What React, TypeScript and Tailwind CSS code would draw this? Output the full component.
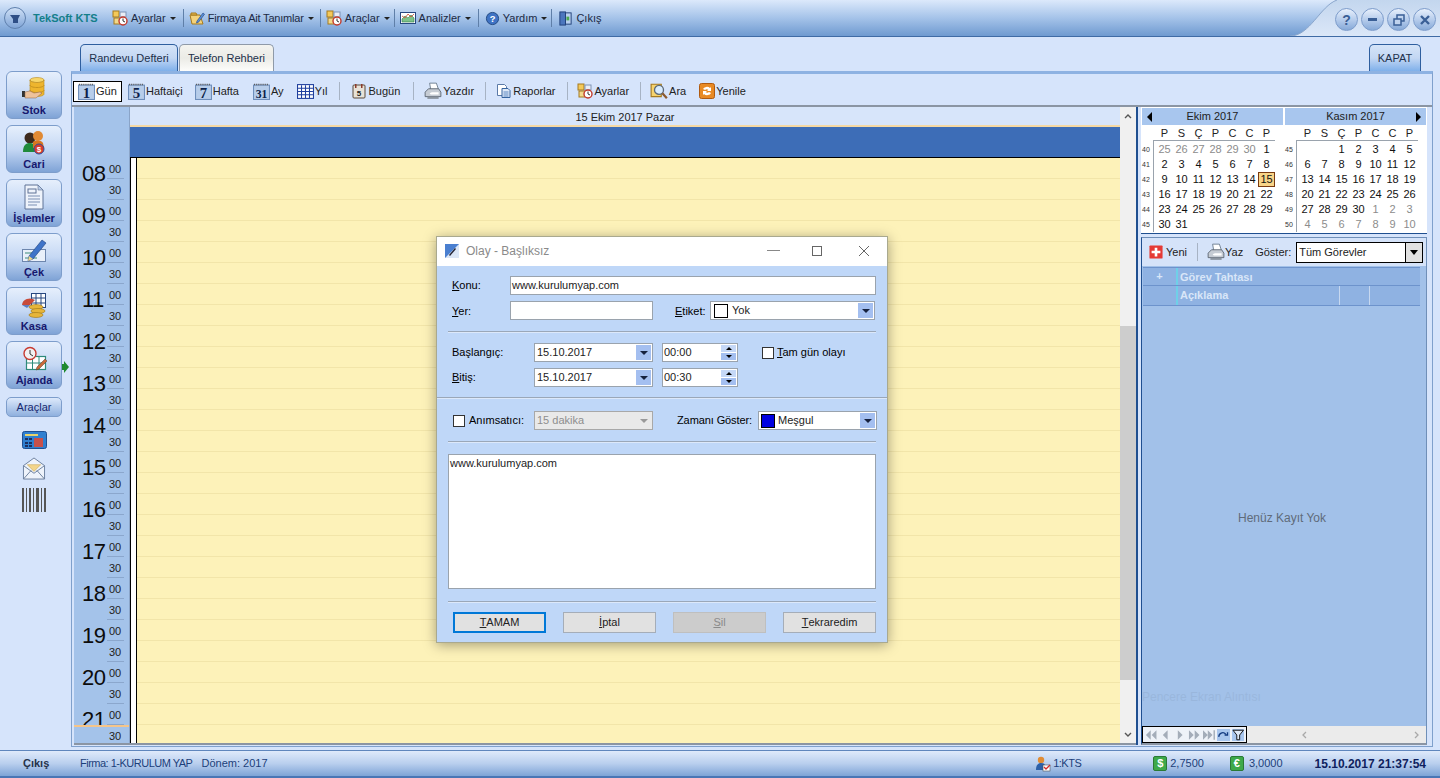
import React from "react";

const F = "font-[Liberation_Sans,Arial,sans-serif]";

function Ic({ s = 16, children, className = "" }: { s?: number; children: React.ReactNode; className?: string }) {
  return (
    <svg width={s} height={s} viewBox="0 0 16 16" className={"shrink-0 " + className}>
      {children}
    </svg>
  );
}
function Big({ children }: { children: React.ReactNode }) {
  return (
    <svg width="26" height="26" viewBox="0 0 26 26" className="shrink-0">
      {children}
    </svg>
  );
}

const Clock = () => (
  <>
    <circle cx="11" cy="11" r="4" fill="#fff" stroke="#c0392b" strokeWidth="1.4" />
    <path d="M11 8.5V11L13 12" stroke="#333" fill="none" />
  </>
);

const SettingsIcon = () => (
  <Ic>
    <rect x="1" y="1" width="6" height="6" fill="#f4c95a" stroke="#a67a1e" />
    <rect x="8" y="2" width="6" height="5" fill="#e9edf5" stroke="#7f93b5" />
    <rect x="2" y="8" width="6" height="6" fill="#f1d98c" stroke="#a67a1e" />
    <Clock />
  </Ic>
);
const FirmIcon = () => (
  <Ic>
    <path d="M1 5h10l3 9H3z" fill="#f4d27a" stroke="#a67a1e" />
    <path d="M2 3h5l1 2H2z" fill="#e7b94e" stroke="#a67a1e" />
    <path d="M8 11l6-8 1.5 1.2-6 8-2 .8z" fill="#5a8fd6" stroke="#2a4f8f" strokeWidth=".7" />
  </Ic>
);
const ChartIcon = () => (
  <Ic>
    <rect x=".5" y="2.5" width="15" height="11" fill="#fff" stroke="#27477f" />
    <path d="M2 12V9l3-3 3 2 3-3 3 3v4z" fill="#7fc28a" stroke="#2f7d4a" strokeWidth=".6" />
    <path d="M2 6l3 2 3-4 3 3 3-3" stroke="#d05a3e" fill="none" strokeWidth=".9" />
  </Ic>
);
const HelpIcon = () => (
  <Ic s={15}>
    <circle cx="8" cy="8" r="6.5" fill="#3f73c4" stroke="#20467f" />
    <text x="8" y="11.5" textAnchor="middle" fontSize="10" fontWeight="700" fill="#fff" fontFamily="Liberation Sans">?</text>
  </Ic>
);
const DoorIcon = () => (
  <Ic s={15}>
    <rect x="2" y="1" width="6" height="14" fill="#4b76bd" stroke="#1f3f78" />
    <rect x="8" y="2" width="6" height="12" fill="#b9d0ef" stroke="#1f3f78" />
    <rect x="9" y="6" width="3" height="4" fill="#4aa84f" />
  </Ic>
);

const CalNum = ({ n }: { n: string }) => (
  <Ic s={17}>
    <rect x=".5" y="2" width="15" height="13.5" fill="#b7cdea" stroke="#6f8fbc" />
    <path d="M1 1.5h14" stroke="#555" strokeWidth="1.4" strokeDasharray="1 1" />
    <text x="8" y="14" textAnchor="middle" fontSize={n.length > 1 ? "11" : "14"} fontWeight="700" fill="#0c1f4a" fontFamily="Liberation Serif">{n}</text>
  </Ic>
);
const GridIcon = () => (
  <Ic s={17}>
    <rect x=".5" y="1.5" width="15" height="13" fill="#fff" stroke="#1f3f9e" />
    <path d="M4.25 2v12M8 2v12M11.75 2v12M1 5h14M1 8h14M1 11h14" stroke="#1f3f9e" />
  </Ic>
);
const BugunIcon = () => (
  <Ic>
    <rect x="2" y="2" width="12" height="13" rx="1" fill="#e7e2d8" stroke="#5a4a3a" />
    <rect x="4" y="1" width="1.5" height="4" fill="#8c3a2a" />
    <rect x="10" y="1" width="1.5" height="4" fill="#8c3a2a" />
    <text x="8" y="13" textAnchor="middle" fontSize="8" fontWeight="700" fill="#222" fontFamily="Liberation Sans">5</text>
  </Ic>
);
const PrintIcon = () => (
  <Ic s={18}>
    <path d="M5 1h6l2 6H6z" fill="#fff" stroke="#6a7a8c" strokeWidth=".8" />
    <path d="M1 9l3-3h9l2 3v4H1z" fill="#c6ccd4" stroke="#5a6470" strokeWidth=".8" />
    <path d="M3 13h10v2H3z" fill="#8b949f" />
    <path d="M5 10l2-1h6v2H6z" fill="#fff" />
  </Ic>
);
const ReportIcon = () => (
  <Ic>
    <path d="M1.5 1.5h7l2 2v9h-9z" fill="#fff" stroke="#5b7aa8" />
    <path d="M6 5.5h6l2 2v7H6z" fill="#dfe9f7" stroke="#35639f" />
    <path d="M7.5 9h5M7.5 11h5M7.5 13h5" stroke="#5b87c2" />
  </Ic>
);
const SearchIcon = () => (
  <Ic s={18}>
    <path d="M1 2h9v11H1z" fill="#f6d36e" stroke="#a67a1e" />
    <circle cx="8" cy="7" r="4" fill="#d8ecff" stroke="#5d6a7a" strokeWidth="1.2" />
    <path d="M11 10l4 4.5" stroke="#8c5a2e" strokeWidth="2" />
  </Ic>
);
const RefreshIcon = () => (
  <Ic>
    <rect x=".5" y=".5" width="15" height="15" rx="2" fill="#e88a25" stroke="#b05a10" />
    <path d="M4 6a4 3 0 0 1 7-1l1-1v4H8l1.3-1.2A2.5 2 0 0 0 6 7zM12 10a4 3 0 0 1-7 1l-1 1V8h4L6.7 9.2A2.5 2 0 0 0 10 9z" fill="#fff" />
  </Ic>
);

function Caret() {
  return <span className="inline-block w-0 h-0 ml-[1px] border-l-[3px] border-r-[3px] border-t-[3px] border-l-transparent border-r-transparent border-t-[#222]" />;
}
const MenuSep = ({ c }: { c: string }) => <div className={"w-px h-[18px] bg-[#5f7fa8] " + c} />;

function MenuItem({ icon, label, caret = true, c = "" }: { icon: React.ReactNode; label: string; caret?: boolean; c?: string }) {
  return (
    <div className="flex items-center gap-[3px] text-[#1c2a44] whitespace-nowrap">
      {icon}
      <span className={c}>{label}</span>
      {caret && <Caret />}
    </div>
  );
}

const WinBtn = ({ children }: { children: React.ReactNode }) => (
  <div className="w-[23px] h-[23px] rounded-full bg-gradient-to-b from-[#e8f0fc] via-[#b7cdec] to-[#86a9d8] border border-[#7d9ccb] flex items-center justify-center">
    {children}
  </div>
);

function TopBar() {
  return (
    <div className="relative h-[37px] shrink-0 border-b border-[#3f6ba5] bg-gradient-to-b from-[#dce9fb] via-[#a5c3e9] to-[#6f9ad0] flex items-center pl-[4px] text-[11px]">
      <div className="w-[22px] h-[22px] rounded-full bg-gradient-to-b from-[#cfe0f6] to-[#7fa4d6] border border-[#5f80ad] flex items-center justify-center mr-[7px]">
        <svg width="12" height="12" viewBox="0 0 12 12"><path d="M1 3h10L9 7v4H4V7z" fill="#2f4f86" /></svg>
      </div>
      <span className="font-bold text-[#147f8a] w-[79px]">TekSoft KTS</span>
      <MenuItem icon={<SettingsIcon />} label="Ayarlar" />
      <MenuSep c="ml-[7px] mr-[5px]" />
      <MenuItem icon={<FirmIcon />} label="Firmaya Ait Tanımlar" c="tracking-[-0.2px]" />
      <MenuSep c="ml-[6px] mr-[5px]" />
      <MenuItem icon={<SettingsIcon />} label="Araçlar" />
      <MenuSep c="ml-[4px] mr-[5px]" />
      <MenuItem icon={<ChartIcon />} label="Analizler" />
      <MenuSep c="ml-[7px] mr-[6px]" />
      <MenuItem icon={<HelpIcon />} label="Yardım" />
      <MenuSep c="ml-[4px] mr-[6px]" />
      <MenuItem icon={<DoorIcon />} label="Çıkış" caret={false} />
      <svg className="absolute right-0 top-0" width="150" height="36" viewBox="0 0 150 36">
        <defs>
          <linearGradient id="cor" x1="0" y1="0" x2="0" y2="1">
            <stop offset="0" stopColor="#c3d6ee" />
            <stop offset="1" stopColor="#dbe7f8" />
          </linearGradient>
        </defs>
        <path d="M0 36C20 36 30 6 47 0H150V36z" fill="url(#cor)" />
        <path d="M0 36C20 36 30 6 47 0" fill="none" stroke="#8aa6cc" />
      </svg>
      <div className="absolute right-[4px] top-[8px] flex gap-[3px]">
        <WinBtn><span className="text-[14px] font-bold text-[#3a5f96] leading-none">?</span></WinBtn>
        <WinBtn><div className="w-[9px] h-[3px] bg-[#3a5f96]" /></WinBtn>
        <WinBtn>
          <svg width="12" height="12" viewBox="0 0 12 12"><rect x="4" y="1" width="7" height="6" fill="none" stroke="#3a5f96" strokeWidth="1.5" /><rect x="1" y="5" width="7" height="6" fill="#c0d3ee" stroke="#3a5f96" strokeWidth="1.5" /></svg>
        </WinBtn>
        <WinBtn>
          <svg width="10" height="10" viewBox="0 0 10 10"><path d="M1 1l8 8M9 1L1 9" stroke="#3a5f96" strokeWidth="2.4" /></svg>
        </WinBtn>
      </div>
    </div>
  );
}

function SideBtn({ label, icon }: { label: string; icon: React.ReactNode }) {
  return (
    <div className="w-[56px] h-[48px] rounded-[6px] border border-[#7d9dcb] bg-gradient-to-b from-[#e6effc] via-[#c5d8f4] to-[#7fa3d6] flex flex-col items-center pt-[2px] shrink-0">
      <div className="h-[29px] flex items-center">{icon}</div>
      <span className="text-[11px] font-bold text-[#17186e] leading-[14px] whitespace-nowrap">{label}</span>
    </div>
  );
}

function Sidebar() {
  return (
    <div className="w-[71px] shrink-0 pl-[6px] pt-[34px] flex flex-col gap-[6px] relative">
      <SideBtn
        label="Stok"
        icon={
          <Big>
            <ellipse cx="16" cy="4" rx="7" ry="2.5" fill="#f7d66a" stroke="#b98a1e" strokeWidth=".6" />
            <path d="M9 4v14c0 1.5 3 2.5 7 2.5s7-1 7-2.5V4c0 1.5-3 2.5-7 2.5S9 5.5 9 4z" fill="#eeb52e" stroke="#b98a1e" strokeWidth=".6" />
            <path d="M9 9c0 1.5 3 2.5 7 2.5s7-1 7-2.5M9 14c0 1.5 3 2.5 7 2.5s7-1 7-2.5" fill="none" stroke="#c8941f" />
            <rect x="1" y="15" width="3" height="6" fill="#333" />
            <path d="M4 16l5-1 4 2 6-1 2 1-6 5H4z" fill="#eec29c" stroke="#8a6344" strokeWidth=".5" />
          </Big>
        }
      />
      <SideBtn
        label="Cari"
        icon={
          <Big>
            <circle cx="9" cy="8" r="5.5" fill="#3d2a1c" />
            <circle cx="17" cy="6" r="5" fill="#e08a34" />
            <path d="M2 22c0-7 3-9 7-9s5 3 5 9z" fill="#1f8a3a" />
            <path d="M12 12c2-2 8-2 10 1l1 5H12z" fill="#d9761f" />
            <circle cx="18" cy="19" r="5" fill="#d93a2b" stroke="#2d4f9a" />
            <text x="18" y="22" textAnchor="middle" fontSize="8" fontWeight="700" fill="#fff" fontFamily="Liberation Sans">$</text>
          </Big>
        }
      />
      <SideBtn
        label="İşlemler"
        icon={
          <Big>
            <path d="M4 1h13l5 5v19H4z" fill="#eef3fb" stroke="#5f7296" />
            <path d="M17 1v5h5z" fill="#b9cbe6" stroke="#5f7296" strokeWidth=".6" />
            <rect x="7" y="5" width="8" height="4" fill="none" stroke="#5f7296" />
            <path d="M7 12h12M7 15h12M7 18h12M7 21h9" stroke="#7a8fb3" />
          </Big>
        }
      />
      <SideBtn
        label="Çek"
        icon={
          <Big>
            <rect x="1.5" y="11.5" width="23" height="12" fill="#e9f0fa" stroke="#6d86ad" />
            <path d="M4 15h8M4 20h12" stroke="#3a8a7a" />
            <path d="M8 18L21 2l4 3-13 16-5 2z" fill="#3f74c9" stroke="#1f3f78" strokeWidth=".6" />
            <path d="M8 18l4 3-5 2z" fill="#f2d58a" />
          </Big>
        }
      />
      <SideBtn
        label="Kasa"
        icon={
          <Big>
            <rect x="10.5" y="1.5" width="14" height="14" fill="#fff" stroke="#27477f" />
            <path d="M15 2v13M20 2v13M11 6h13M11 11h13" stroke="#27477f" />
            <path d="M1 13a8 7 0 0 1 13-5l-5 5z" fill="#c84b3a" />
            <path d="M1 13h8l-3 3z" fill="#5a7cc0" />
            <ellipse cx="15" cy="15" rx="7" ry="2.5" fill="#e7b53a" stroke="#9a7318" strokeWidth=".6" />
            <ellipse cx="17" cy="19" rx="7" ry="2.5" fill="#e7b53a" stroke="#9a7318" strokeWidth=".6" />
            <ellipse cx="15" cy="23" rx="7" ry="2.5" fill="#e7b53a" stroke="#9a7318" strokeWidth=".6" />
          </Big>
        }
      />
      <SideBtn
        label="Ajanda"
        icon={
          <Big>
            <rect x="5.5" y="10.5" width="19" height="13" fill="#fff" stroke="#2e8a7a" strokeWidth="1.2" />
            <path d="M11.5 11v12M18 11v12M6 17h18" stroke="#2e8a7a" />
            <circle cx="9" cy="7.5" r="6" fill="#f2f2f2" stroke="#c83a30" strokeWidth="1.4" />
            <path d="M9 4v4l3 2" stroke="#333" fill="none" />
            <path d="M16 21l8-8 2 2-8 8-3 1z" fill="#c96a3a" stroke="#5a3a2a" strokeWidth=".5" />
          </Big>
        }
      />
      <svg className="absolute left-[62px] top-[324px]" width="7" height="12" viewBox="0 0 7 12"><path d="M0 3h2V0l5 6-5 6V9H0z" fill="#1f8a2e" /></svg>
      <div className="w-[56px] h-[20px] mt-[2px] rounded-[5px] border border-[#7d9dcb] bg-gradient-to-b from-[#dde9fb] to-[#8fb0de] flex items-center justify-center text-[11px] text-[#17286e]">Araçlar</div>
      <div className="flex flex-col items-center w-[56px] mt-[8px] gap-[8px]">
        <svg width="25" height="18" viewBox="0 0 25 18"><rect x=".5" y=".5" width="24" height="17" rx="2" fill="#2f7fd0" stroke="#1f4f90" /><rect x="3" y="3" width="13" height="2" fill="#e7d26b" /><path d="M3 7h3v2H3zM7 7h3v2H7zM3 11h3v2H3zM7 11h3v2H7zM3 14h3v2H3zM7 14h3v2H7z" fill="#1d2f5f" /><rect x="12" y="7" width="9" height="9" fill="#c8504a" /></svg>
        <svg width="24" height="23" viewBox="0 0 24 24"><path d="M1 9l11-8 11 8v14H1z" fill="#eef3fb" stroke="#6c7f9e" /><path d="M5 8h14l-7 7z" fill="#f3d58a" stroke="#c9a857" strokeWidth=".6" /><path d="M1 9l11 8 11-8M1 23l8-9M23 23l-8-9" fill="none" stroke="#6c7f9e" /></svg>
        <div className="flex h-[24px] gap-[2px]">
          {[2, 1, 2, 1, 3, 1, 2].map((w, i) => (
            <div key={i} className="bg-[#555] h-full" style={{ width: w }} />
          ))}
        </div>
      </div>
    </div>
  );
}

function Tabs() {
  return (
    <div className="h-[34px] shrink-0 flex items-end relative text-[11px]">
      <div className="ml-[9px] w-[98px] h-[27px] rounded-t-[5px] border border-b-0 border-[#2f5f9f] bg-gradient-to-b from-[#d5e4f8] via-[#c3d7f3] to-[#7fb0ea] flex items-center justify-center text-[#22304a]">Randevu Defteri</div>
      <div className="ml-[1px] w-[95px] h-[27px] rounded-t-[5px] border border-b-0 border-[#8f9aa8] bg-gradient-to-b from-[#f4f4f0] via-[#ebebe6] to-[#fdfdfb] flex items-center justify-center text-[#22304a]">Telefon Rehberi</div>
      <div className="ml-auto mr-[12px] w-[52px] h-[27px] rounded-t-[5px] border border-b-0 border-[#2f5f9f] bg-gradient-to-b from-[#d5e4f8] via-[#c3d7f3] to-[#7fb0ea] flex items-center justify-center text-[#22304a] text-[11px]">KAPAT</div>
    </div>
  );
}

const TSep = ({ c }: { c: string }) => <div className={"w-px h-[18px] bg-[#a7b3c4] " + c} />;

function TBtn({ icon, label, c = "" }: { icon: React.ReactNode; label: string; c?: string }) {
  return (
    <div className={"flex items-center gap-[1px] text-[#222] " + c}>
      {icon}
      <span>{label}</span>
    </div>
  );
}

function Toolbar() {
  return (
    <div className="h-[33px] shrink-0 flex items-center pt-[3px] pl-[1px] text-[11px] border-b-2 border-[#8b95a3]">
      <div className="w-[49px] h-[21px] bg-white border border-black flex items-center gap-[1px] pl-[4px] text-[#222]">
        <CalNum n="1" />
        <span>Gün</span>
      </div>
      <TBtn c="ml-[6px]" icon={<CalNum n="5" />} label="Haftaiçi" />
      <TBtn c="ml-[12px]" icon={<CalNum n="7" />} label="Hafta" />
      <TBtn c="ml-[14px]" icon={<CalNum n="31" />} label="Ay" />
      <TBtn c="ml-[13px]" icon={<GridIcon />} label="Yıl" />
      <TSep c="ml-[12px]" />
      <TBtn c="ml-[11px]" icon={<BugunIcon />} label="Bugün" />
      <TSep c="ml-[13px]" />
      <TBtn c="ml-[10px]" icon={<PrintIcon />} label="Yazdır" />
      <TSep c="ml-[11px]" />
      <TBtn c="ml-[10px]" icon={<ReportIcon />} label="Raporlar" />
      <TSep c="ml-[12px]" />
      <TBtn c="ml-[9px]" icon={<SettingsIcon />} label="Ayarlar" />
      <TSep c="ml-[11px]" />
      <TBtn c="ml-[9px]" icon={<SearchIcon />} label="Ara" />
      <TBtn c="ml-[13px]" icon={<RefreshIcon />} label="Yenile" />
    </div>
  );
}

const hours = ["08", "09", "10", "11", "12", "13", "14", "15", "16", "17", "18", "19", "20", "21"];

function TimeCol() {
  return (
    <div className="w-[56px] shrink-0 bg-[#a4c3ea] border-r border-[#8aa4c8] flex flex-col overflow-hidden relative">
      <div className="h-[51px] shrink-0" />
      {hours.map((h) => (
        <div key={h} className="h-[42px] shrink-0 flex pl-[8px] pr-[5px]">
          <div className="w-[25px] text-[22px] leading-[32px] text-[#0c0c0c] tracking-[-0.5px]">{h}</div>
          <div className="flex-1 flex flex-col text-[11px] text-[#222] border-b border-[#8ba7cd]">
            <div className="h-[21px] border-b border-[#8ba7cd] leading-[22px] pl-[2px]">00</div>
            <div className="h-[20px] leading-[22px] pl-[2px]">30</div>
          </div>
        </div>
      ))}
      <div className="absolute left-0 right-0 top-[618px] h-[2px] bg-[#f5c58a]" />
    </div>
  );
}

function Scheduler() {
  return (
    <div className="flex-1 min-w-0 flex flex-col overflow-hidden">
      <div className="h-[20px] shrink-0 pt-[2px] bg-[#d7e5fa] border-b-2 border-[#f5d9a4] flex items-center justify-center text-[11px] text-[#222]">15 Ekim 2017 Pazar</div>
      <div className="h-[31px] shrink-0 bg-[#3d6db7] border-b border-black" />
      <div className="flex-1 flex min-h-0">
        <div className="w-[7px] bg-white shrink-0 border-x border-black" />
        <div className="flex-1 bg-[#fdf2b9] flex flex-col overflow-hidden">
          {Array.from({ length: 29 }).map((_, i) => (
            <div key={i} className="h-[21px] shrink-0 border-b border-[#f2e5a9]" />
          ))}
        </div>
      </div>
    </div>
  );
}

function Scroll() {
  return (
    <div className="w-[16px] shrink-0 bg-[#f0f0f0] flex flex-col">
      <div className="h-[219px] shrink-0 bg-[#f0f0f0] pt-[6px] flex justify-center">
        <svg width="8" height="6" viewBox="0 0 8 6"><path d="M1 5l3-3 3 3" fill="none" stroke="#555" strokeWidth="1.4" /></svg>
      </div>
      <div className="h-[354px] shrink-0 bg-[#cdcdcd]" />
      <div className="flex-1" />
      <div className="h-[16px] flex items-center justify-center">
        <svg width="8" height="6" viewBox="0 0 8 6"><path d="M1 1l3 3 3-3" fill="none" stroke="#555" strokeWidth="1.4" /></svg>
      </div>
    </div>
  );
}

const oct = [["40", "25", "26", "27", "28", "29", "30", "1"], ["41", "2", "3", "4", "5", "6", "7", "8"], ["42", "9", "10", "11", "12", "13", "14", "15"], ["43", "16", "17", "18", "19", "20", "21", "22"], ["44", "23", "24", "25", "26", "27", "28", "29"], ["45", "30", "31", "", "", "", "", ""]];
const nov = [["45", "", "", "1", "2", "3", "4", "5"], ["46", "6", "7", "8", "9", "10", "11", "12"], ["47", "13", "14", "15", "16", "17", "18", "19"], ["48", "20", "21", "22", "23", "24", "25", "26"], ["49", "27", "28", "29", "30", "1", "2", "3"], ["50", "4", "5", "6", "7", "8", "9", "10"]];

function Month({ title, rows, first, last, prev, next }: { title: string; rows: string[][]; first: number; last: number; prev?: boolean; next?: boolean }) {
  return (
    <div className="w-[141px] flex flex-col">
      <div className="h-[17px] bg-[#a8c6ee] flex items-center justify-between px-[5px] text-[11px] text-[#222]">
        <span className={"w-[5px] h-0 border-y-[5px] border-y-transparent " + (prev ? "w-0 border-r-[5px] border-r-black" : "")} />
        <span>{title}</span>
        <span className={"w-[5px] h-0 border-y-[5px] border-y-transparent " + (next ? "w-0 border-l-[5px] border-l-black" : "")} />
      </div>
      <div className="flex h-[15px] pl-[14px] text-[11px] text-[#222] leading-[16px]">
        {["P", "S", "Ç", "P", "C", "C", "P"].map((d, i) => (
          <div key={i} className="w-[17px] text-center">{d}</div>
        ))}
      </div>
      <div className="flex">
        <div className="w-[12px] shrink-0 border-r border-[#9aa3ad] flex flex-col pt-[2px]">
          {rows.map((r) => (
            <div key={r[0]} className="h-[15px] text-[7px] leading-[15px] text-[#333]">{r[0]}</div>
          ))}
        </div>
        <div className="flex flex-col border-t border-[#9aa3ad] w-[121px] pt-[1px] pl-[2px]">
          {rows.map((r, ri) => (
            <div key={ri} className="flex h-[15px]">
              {r.slice(1).map((d, i) => {
                const idx = ri * 7 + i;
                const dim = idx < first || idx > last;
                const today = title.startsWith("Ekim") && d === "15";
                return (
                  <div key={i} className={"w-[17px] h-[15px] text-center text-[11px] " + (dim ? "text-[#8c8c8c] " : "text-[#111] ") + (today ? "bg-[#f8d487] border border-[#7a3a10] leading-[13px]" : "leading-[15px]")}>
                    {d}
                  </div>
                );
              })}
            </div>
          ))}
        </div>
      </div>
    </div>
  );
}

function RightPane() {
  return (
    <div className="w-[286px] shrink-0 flex flex-col gap-[3px]">
      <div className="h-[127px] shrink-0 bg-white border-b border-[#1f4f90] flex justify-between p-[1px]">
        <Month title="Ekim 2017" rows={oct} first={6} last={36} prev />
        <Month title="Kasım 2017" rows={nov} first={0} last={31} next />
      </div>
      <div className="flex-1 min-h-0 bg-[#a2c1e9] border border-[#6f8fb8] border-l-[#1f4f90] border-b-2 border-b-[#8b95a3] flex flex-col">
        <div className="h-[28px] shrink-0 bg-[#d5e3f9] flex items-center pl-[7px] text-[11px] text-[#222]">
          <Ic s={14}><rect x=".5" y=".5" width="15" height="15" rx="1" fill="#e53a35" /><path d="M8 3v10M3 8h10" stroke="#fff" strokeWidth="3" /></Ic>
          <span className="ml-[3px]">Yeni</span>
          <div className="w-px h-[18px] bg-[#a7b3c4] ml-[10px]" />
          <div className="ml-[9px] flex items-center"><PrintIcon /><span>Yaz</span></div>
          <span className="ml-[12px] whitespace-nowrap">Göster:</span>
          <div className="ml-[5px] w-[127px] h-[21px] bg-white border border-black flex items-center pl-[2px] justify-between whitespace-nowrap">
            <span>Tüm Görevler</span>
            <div className="w-[17px] h-full bg-[#e1e1e1] border-l border-black flex items-center justify-center">
              <span className="w-0 h-0 border-l-[4px] border-r-[4px] border-t-[5px] border-l-transparent border-r-transparent border-t-black" />
            </div>
          </div>
        </div>
        <div className="mx-[1px] mr-[6px] flex flex-col text-[11px] font-bold text-[#d9e6f8] mt-[1px]">
          <div className="h-[19px] flex bg-[#8fb2e2] border-y border-[#6d93cc]">
            <div className="w-[35px] border-r-2 border-[#6fd0e8] flex items-center justify-center">+</div>
            <div className="pl-[2px] leading-[18px]">Görev Tahtası</div>
          </div>
          <div className="h-[20px] flex bg-[#8fb2e2] border-b border-[#6d93cc]">
            <div className="w-[35px] border-r-2 border-[#6fd0e8]" />
            <div className="w-[162px] pl-[2px] leading-[18px] border-r border-[#c7d8f0]">Açıklama</div>
            <div className="w-[30px] border-r border-[#c7d8f0]" />
          </div>
        </div>
        <div className="flex-1 flex items-center justify-center text-[12px] text-[#5f6b7a] relative">
          <span className="mt-[3px] ml-[-4px]">Henüz Kayıt Yok</span>
          <span className="absolute left-[0px] bottom-[20px] text-[12px] text-[#000] opacity-[0.05]">Pencere Ekran Alıntısı</span>
        </div>
        <div className="h-[17px] shrink-0 bg-[#ebebeb] flex items-center justify-between">
          <div className="h-full w-[105px] bg-[#eef2f8] border border-black flex items-center px-[2px] gap-[2px]">
            {["M6 1L1 6l5 5zM12 1L7 6l5 5z", "M9 1L4 6l5 5z", "M4 1l5 5-5 5z", "M1 1l5 5-5 5zM7 1l5 5-5 5z", "M0 1l5 5-5 5zM5 1l5 5-5 5zM11 1h1.5v10H11z"].map((d, i) => (
              <svg key={i} width="13" height="12" viewBox="0 0 13 12"><path d={d} fill="#a4adb9" /></svg>
            ))}
            <svg width="13" height="12" viewBox="0 0 13 12" className="bg-[#a8c6ee]"><path d="M2 8a4 4 0 0 1 7-3M11 3v3H8" fill="none" stroke="#123a80" strokeWidth="1.4" /></svg>
            <svg width="13" height="12" viewBox="0 0 13 12" className="bg-[#a8c6ee]"><path d="M1 1h11L8 6v5H5V6z" fill="#dfe9f7" stroke="#111" /></svg>
          </div>
          <div className="flex-1 flex justify-between px-[54px] pr-[6px] text-[#aaa]">
            <svg width="6" height="8" viewBox="0 0 6 8"><path d="M5 1L2 4l3 3" fill="none" stroke="#a9a9a9" strokeWidth="1.3" /></svg>
            <svg width="6" height="8" viewBox="0 0 6 8"><path d="M1 1l3 3-3 3" fill="none" stroke="#a9a9a9" strokeWidth="1.3" /></svg>
          </div>
        </div>
      </div>
    </div>
  );
}

function Input({ c, children }: { c: string; children?: React.ReactNode }) {
  return <div className={"h-[19px] bg-white border border-[#9aa3ad] flex items-center pl-[1px] text-[#222] whitespace-nowrap " + c}>{children}</div>;
}
const DropBtn = ({ dim }: { dim?: boolean }) => (
  <div className={"w-[15px] h-[15px] mr-[1px] ml-auto flex items-center justify-center " + (dim ? "" : "bg-[#a4bff0]")}>
    <span className={"w-0 h-0 border-l-[4px] border-r-[4px] border-t-[4px] border-l-transparent border-r-transparent " + (dim ? "border-t-[#999]" : "border-t-[#16213e]")} />
  </div>
);
const Spin = () => (
  <div className="ml-auto mr-[1px] flex flex-col gap-[1px] w-[15px]">
    <div className="h-[7px] bg-[#c5d8f7] flex items-center justify-center"><span className="w-0 h-0 border-l-[3px] border-r-[3px] border-b-[3px] border-l-transparent border-r-transparent border-b-black" /></div>
    <div className="h-[7px] bg-[#a4bff0] flex items-center justify-center"><span className="w-0 h-0 border-l-[3px] border-r-[3px] border-t-[3px] border-l-transparent border-r-transparent border-t-black" /></div>
  </div>
);
const Check = () => <div className="w-[12px] h-[12px] bg-white border border-[#333] shrink-0" />;
const Sep = ({ c }: { c: string }) => <div className={"h-[2px] bg-[#9aa7b8] border-b border-[#dce8fa] " + c} />;
const Btn = ({ children, c }: { children: React.ReactNode; c: string }) => (
  <div className={"w-[93px] h-[21px] border flex items-center justify-center text-[#222] " + c}>{children}</div>
);

function Dialog() {
  return (
    <div className="absolute left-[436px] top-[236px] w-[452px] h-[407px] border border-[#a9a98f] bg-[#bfd7f8] shadow-[0_2px_12px_rgba(0,0,0,0.35)] text-[11px] flex flex-col">
      <div className="h-[29px] shrink-0 bg-white flex items-center pl-[8px] pb-[2px]">
        <svg width="14" height="14" viewBox="0 0 14 14"><rect width="14" height="14" fill="#dbe6f6" /><path d="M0 0h14L0 14z" fill="#4a7fd0" /><path d="M4 11l6-7 1 1-6 7z" fill="#223" /></svg>
        <span className="ml-[7px] text-[#8a8a8a] text-[12px]">Olay - Başlıksız</span>
        <div className="ml-auto flex items-center text-[#555]">
          <div className="w-[13px] h-px bg-[#888] mr-[32px]" />
          <div className="w-[10px] h-[10px] border border-[#666] mr-[36px]" />
          <svg width="12" height="12" viewBox="0 0 12 12" className="mr-[17px]"><path d="M1 1l10 10M11 1L1 11" stroke="#666" /></svg>
        </div>
      </div>
      <div className="flex-1 flex flex-col relative">
        <div className="flex items-center mt-[10px] pl-[15px]">
          <span className="w-[58px]"><u>K</u>onu:</span>
          <Input c="w-[366px]">www.kurulumyap.com</Input>
        </div>
        <div className="flex items-center mt-[6px] pl-[15px]">
          <span className="w-[58px] pt-[1px]"><u>Y</u>er:</span>
          <Input c="w-[143px]" />
          <span className="ml-[22px] w-[35px] pt-[1px]"><u>E</u>tiket:</span>
          <Input c="w-[165px] pl-[3px]"><div className="w-[14px] h-[14px] border border-black bg-white mr-[4px]" />Yok<DropBtn /></Input>
        </div>
        <Sep c="mx-[11px] mt-[11px]" />
        <div className="flex items-center mt-[10px] pl-[15px]">
          <span className="w-[82px]">Başlangıç:</span>
          <Input c="w-[119px] pl-[2px]">15.10.2017<DropBtn /></Input>
          <Input c="w-[76px] ml-[9px] mr-[24px]">00:00<Spin /></Input>
          <Check />
          <span className="ml-[3px]"><u>T</u>am gün olayı</span>
        </div>
        <div className="flex items-center mt-[6px] pl-[15px]">
          <span className="w-[82px]"><u>B</u>itiş:</span>
          <Input c="w-[119px] pl-[2px]">15.10.2017<DropBtn /></Input>
          <Input c="w-[76px] ml-[9px]">00:30<Spin /></Input>
        </div>
        <Sep c="mt-[10px]" />
        <div className="flex items-center mt-[12px] pl-[16px]">
          <Check />
          <span className="ml-[4px] w-[65px]">Anımsatıcı:</span>
          <div className="h-[19px] w-[119px] bg-[#e9e9e9] border border-[#a8a8a8] flex items-center pl-[2px] text-[#8e8e8e] whitespace-nowrap">15 dakika<DropBtn dim /></div>
          <span className="ml-[24px] w-[81px] whitespace-nowrap tracking-[-0.1px]">Zamanı Göster:</span>
          <Input c="w-[119px] pl-[2px]"><div className="w-[14px] h-[14px] bg-[#0000e0] border border-black mr-[3px]" />Meşgul<DropBtn /></Input>
        </div>
        <Sep c="mx-[11px] mt-[11px]" />
        <div className="mx-[11px] mt-[11px] h-[135px] bg-white border border-[#9aa3ad] pl-[1px] text-[#222]">www.kurulumyap.com</div>
        <Sep c="mx-[11px] mt-[12px]" />
        <div className="flex pl-[16px] gap-[17px] mt-[9px]">
          <Btn c="bg-[#e1e1e1] border-2 border-[#0078d7]"><u>T</u>AMAM</Btn>
          <Btn c="bg-[#e1e1e1] border-[#a5adb8]"><u>İ</u>ptal</Btn>
          <Btn c="bg-[#cccccc] border-[#bfbfbf] text-[#8a8a8a]"><span className="text-[#8a8a8a]"><u>S</u>il</span></Btn>
          <Btn c="bg-[#e1e1e1] border-[#a5adb8]"><u>T</u>ekraredim</Btn>
        </div>
      </div>
    </div>
  );
}

function Status() {
  return (
    <div className="h-[28px] shrink-0 mt-[3px] border-t border-[#5f86bd] border-b-2 border-b-[#4a76b5] bg-gradient-to-b from-[#dfeafb] via-[#b9cfee] to-[#7ea4d6] flex items-center text-[11px]">
      <span className="ml-[23px] font-bold text-[#26334a] w-[57px]">Çıkış</span>
      <span className="text-[#1c3f7a] tracking-[-0.5px]">Firma: 1-KURULUM YAP</span>
      <span className="text-[#1c3f7a] ml-[9px]">Dönem: 2017</span>
      <div className="ml-auto flex items-center">
        <svg width="16" height="16" viewBox="0 0 16 16"><circle cx="6" cy="4" r="3.2" fill="#e08c34" /><path d="M1 14c0-5 2-7 5-7s4 1 4 3v4z" fill="#2d60a8" /><rect x="8" y="9" width="7" height="6" fill="#fff" stroke="#555" strokeWidth=".6" /><path d="M9 11l2 2 4-4" stroke="#d12c2c" fill="none" strokeWidth="1.3" /></svg>
        <span className="ml-[2px] text-[#1c3f7a] tracking-[-0.5px]">1:KTS</span>
        <span className="ml-[72px] w-[14px] h-[15px] rounded-[2px] bg-[#3ea94a] border border-[#2a7a35] text-white text-[11px] font-bold leading-[13px] text-center">$</span>
        <span className="ml-[3px] text-[#1c3f7a]">2,7500</span>
        <span className="ml-[26px] w-[14px] h-[15px] rounded-[2px] bg-[#3ea94a] border border-[#2a7a35] text-white text-[11px] font-bold leading-[13px] text-center">€</span>
        <span className="ml-[5px] text-[#1c3f7a]">3,0000</span>
        <span className="ml-[32px] mr-[14px] font-bold text-[#0f1f5e] text-[12px]">15.10.2017 21:37:54</span>
      </div>
    </div>
  );
}

export default function App() {
  return (
    <div className={"relative w-[1440px] h-[778px] overflow-hidden bg-[#d6e4fb] flex flex-col " + F}>
      <TopBar />
      <div className="flex-1 min-h-0 flex">
        <Sidebar />
        <div className="flex-1 min-w-0 flex flex-col pr-[7px]">
          <Tabs />
          <div className="flex-1 min-h-0 flex flex-col border border-t-[3px] border-[#7fa0cc] border-t-[#8eb2e2]">
            <Toolbar />
            <div className="flex-1 min-h-0 flex pl-[2px] pr-[5px] pb-[1px]">
              <div className="flex-1 min-w-0 flex border-b-2 border-[#8b95a3]">
                <TimeCol />
                <Scheduler />
                <Scroll />
              </div>
              <div className="w-[5px] shrink-0 bg-[#d6e4fb] border-l-2 border-[#1f4f90]" />
              <RightPane />
            </div>
          </div>
        </div>
      </div>
      <Status />
      <Dialog />
    </div>
  );
}
